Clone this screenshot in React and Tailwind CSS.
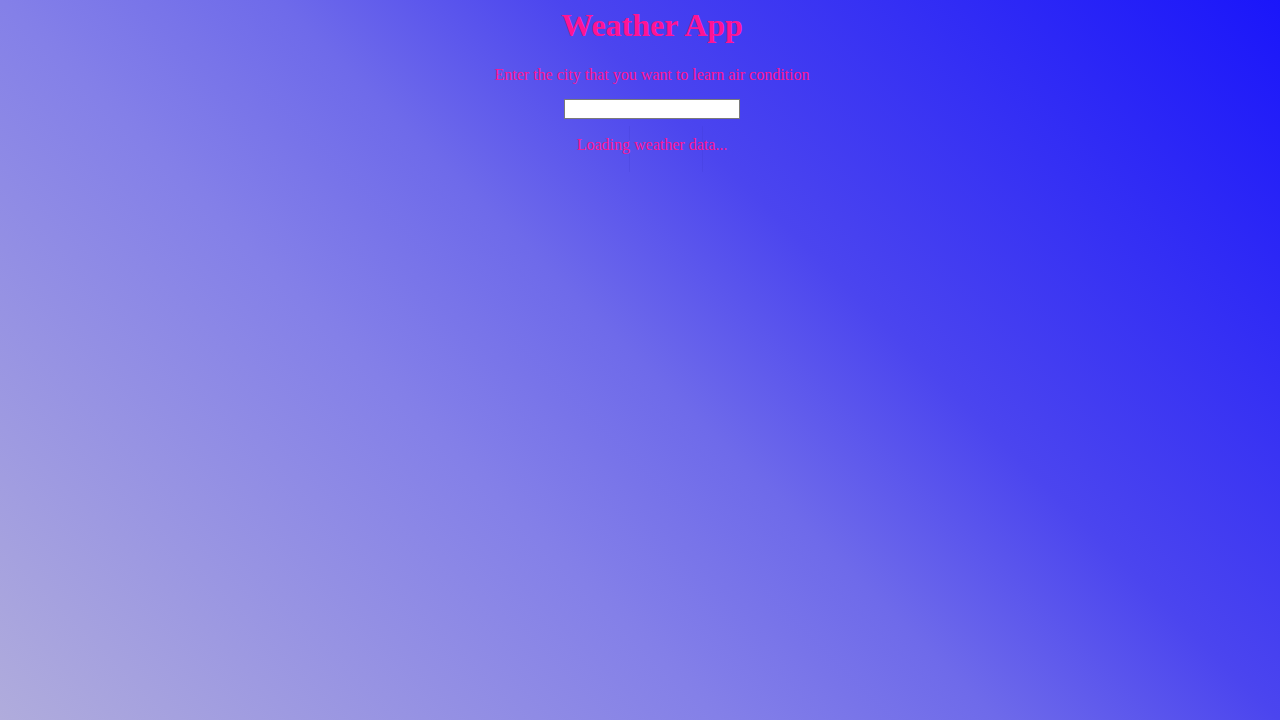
import React, { useState } from 'react';

const App = () => {
  const [city, setCity] = useState('');
  return (
    <div
      className="min-h-screen w-full bg-[linear-gradient(45deg,#b0acdc_0%,#8480e8_36%,#6e6aea_50%,#4b45ef_64%,#1a16fa_100%)] text-[#ff1493]"
      style={{ fontFamily: '"Liberation Serif", "Times New Roman", serif' }}
    >
      <div className="flex flex-col items-center pl-6">
        {/* Header */}
        <h1 className="mt-[7px] text-[32px] font-bold leading-[37px]">Weather App</h1>
        <p className="mt-[22px] text-base leading-[18px]">
          Enter the city that you want to learn air condition
        </p>
        <input
          type="text"
          value={city}
          onChange={(e) => setCity(e.target.value)}
          className="mt-[15px] h-[20px] w-[176px] border border-[#7a7a7a] bg-white px-1 text-sm text-black outline-none"
        />
        {/* Status */}
        <div className="relative mt-[17px]">
          <div className="absolute left-[52px] top-[-10px] h-[46px] w-[74px] border-x border-[#3d38c8]/20" />
          <p className="relative text-base leading-[18px]">Loading weather data...</p>
        </div>
      </div>
    </div>
  );
};

export default App;
